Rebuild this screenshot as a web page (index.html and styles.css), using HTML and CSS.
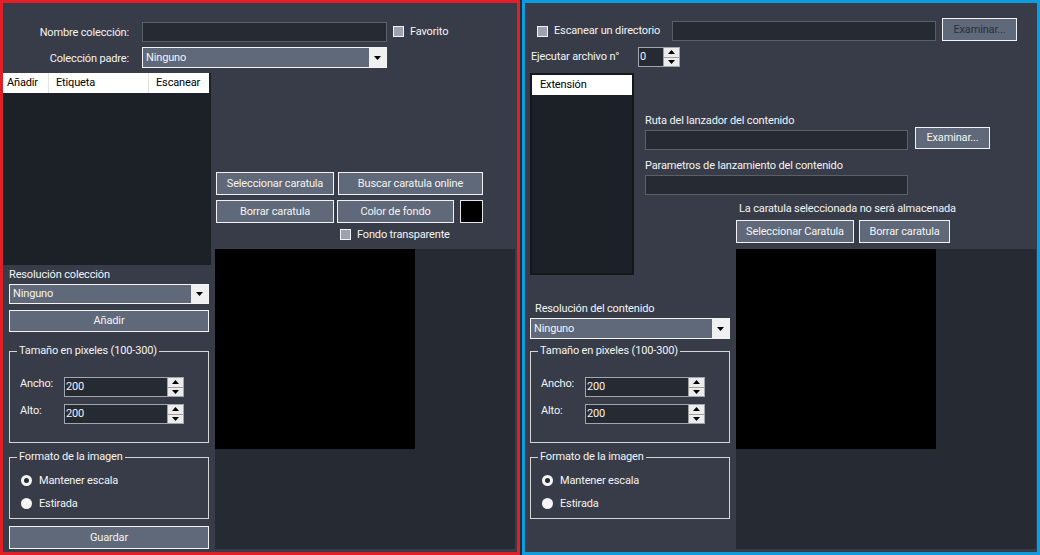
FILE: index.html
```html
<!DOCTYPE html>
<html lang="es">
<head>
<meta charset="utf-8">
<title>Colección</title>
<link rel="stylesheet" href="styles.css">
</head>
<body>
<div class="app">
  <section class="panel panel-left">
    <div class="form-top">
      <div class="frow">
        <span class="flabel">Nombre colección:</span>
        <div class="textbox tb-name"></div>
        <span class="check check-fav"><span class="cbox"></span>Favorito</span>
      </div>
      <div class="frow">
        <span class="flabel">Colección padre:</span>
        <div class="combo combo-parent"><span class="combo-text">Ninguno</span><span class="combo-btn"><svg width="7" height="4" viewBox="0 0 7 4"><path d="M0 0h7L3.5 4z" fill="#000"/></svg></span></div>
      </div>
    </div>
    <div class="lbody">
      <div class="lcol">
        <div class="listview lv-left">
          <div class="lv-head">
            <span class="lv-col c1">Añadir</span>
            <span class="lv-col c2">Etiqueta</span>
            <span class="lv-col c3">Escanear</span>
          </div>
        </div>
        <div class="lcol-inner">
          <div class="caption cap-res">Resolución colección</div>
          <div class="combo combo-res"><span class="combo-text">Ninguno</span><span class="combo-btn"><svg width="7" height="4" viewBox="0 0 7 4"><path d="M0 0h7L3.5 4z" fill="#000"/></svg></span></div>
          <button class="btn btn-add">Añadir</button>
          <div class="group group-size">
            <span class="group-title">Tamaño en pixeles (100-300)</span>
            <div class="num-row"><span class="num-label">Ancho:</span><div class="numeric num-size"><span class="num-val">200</span><span class="spin"><span class="spin-b"><svg width="7" height="4" viewBox="0 0 7 4"><path d="M0 4h7L3.5 0z" fill="#000"/></svg></span><span class="spin-b"><svg width="7" height="4" viewBox="0 0 7 4"><path d="M0 0h7L3.5 4z" fill="#000"/></svg></span></span></div></div>
            <div class="num-row"><span class="num-label">Alto:</span><div class="numeric num-size"><span class="num-val">200</span><span class="spin"><span class="spin-b"><svg width="7" height="4" viewBox="0 0 7 4"><path d="M0 4h7L3.5 0z" fill="#000"/></svg></span><span class="spin-b"><svg width="7" height="4" viewBox="0 0 7 4"><path d="M0 0h7L3.5 4z" fill="#000"/></svg></span></span></div></div>
          </div>
          <div class="group group-format">
            <span class="group-title">Formato de la imagen</span>
            <div class="radio-row"><span class="radio radio-on"></span>Mantener escala</div>
            <div class="radio-row"><span class="radio radio-off"></span>Estirada</div>
          </div>
          <button class="btn btn-save">Guardar</button>
        </div>
      </div>
      <div class="rcol">
        <div class="btn-row">
          <button class="btn btn-sel">Seleccionar caratula</button>
          <button class="btn btn-online">Buscar caratula online</button>
        </div>
        <div class="btn-row btn-row-2">
          <button class="btn btn-del">Borrar caratula</button>
          <button class="btn btn-color">Color de fondo</button>
          <span class="swatch"></span>
        </div>
        <span class="check check-transp"><span class="cbox"></span>Fondo transparente</span>
        <div class="preview"><div class="preview-img"></div></div>
      </div>
    </div>
  </section>

  <section class="panel panel-right">
    <div class="r-row1">
      <span class="check r-check"><span class="cbox"></span>Escanear un directorio</span>
      <div class="textbox r-tb"></div>
      <button class="btn btn-disabled r-exam">Examinar...</button>
    </div>
    <div class="r-row2">
      <span class="r-lbl">Ejecutar archivo n°</span>
      <div class="numeric num-exec"><span class="num-val">0</span><span class="spin"><span class="spin-b"><svg width="7" height="4" viewBox="0 0 7 4"><path d="M0 4h7L3.5 0z" fill="#000"/></svg></span><span class="spin-b"><svg width="7" height="4" viewBox="0 0 7 4"><path d="M0 0h7L3.5 4z" fill="#000"/></svg></span></span></div>
    </div>
    <div class="r-body">
      <div class="r-left">
        <div class="lv-ext"><div class="lv-ext-head">Extensión</div></div>
        <div class="caption cap-res-r">Resolución del contenido</div>
        <div class="combo combo-res-r"><span class="combo-text">Ninguno</span><span class="combo-btn"><svg width="7" height="4" viewBox="0 0 7 4"><path d="M0 0h7L3.5 4z" fill="#000"/></svg></span></div>
        <div class="group group-size group-size-r">
          <span class="group-title">Tamaño en pixeles (100-300)</span>
          <div class="num-row"><span class="num-label">Ancho:</span><div class="numeric num-size"><span class="num-val">200</span><span class="spin"><span class="spin-b"><svg width="7" height="4" viewBox="0 0 7 4"><path d="M0 4h7L3.5 0z" fill="#000"/></svg></span><span class="spin-b"><svg width="7" height="4" viewBox="0 0 7 4"><path d="M0 0h7L3.5 4z" fill="#000"/></svg></span></span></div></div>
          <div class="num-row"><span class="num-label">Alto:</span><div class="numeric num-size"><span class="num-val">200</span><span class="spin"><span class="spin-b"><svg width="7" height="4" viewBox="0 0 7 4"><path d="M0 4h7L3.5 0z" fill="#000"/></svg></span><span class="spin-b"><svg width="7" height="4" viewBox="0 0 7 4"><path d="M0 0h7L3.5 4z" fill="#000"/></svg></span></span></div></div>
        </div>
        <div class="group group-format">
          <span class="group-title">Formato de la imagen</span>
          <div class="radio-row"><span class="radio radio-on"></span>Mantener escala</div>
          <div class="radio-row"><span class="radio radio-off"></span>Estirada</div>
        </div>
      </div>
      <div class="r-top">
        <div class="caption cap-ruta">Ruta del lanzador del contenido</div>
        <div class="ruta-row">
          <div class="textbox r-path"></div>
          <button class="btn r-exam2">Examinar...</button>
        </div>
        <div class="caption cap-param">Parametros de lanzamiento del contenido</div>
        <div class="textbox r-param"></div>
        <div class="caption cap-note">La caratula seleccionada no será almacenada</div>
        <div class="btn-row r-btns">
          <button class="btn btn-sel-r">Seleccionar Caratula</button>
          <button class="btn btn-del-r">Borrar caratula</button>
        </div>
      </div>
      <div class="preview r-preview"><div class="preview-img"></div></div>
    </div>
  </section>
</div>
</body>
</html>
```

FILE: styles.css
```css
* { box-sizing: border-box; }
html, body { margin: 0; padding: 0; }
body {
  width: 1040px;
  height: 555px;
  overflow: hidden;
  background: #262a33;
  font-family: Roboto, "Liberation Sans", Arial, sans-serif;
  font-size: 11px;
  line-height: 14px;
  letter-spacing: -0.15px;
  color: #f4f4f4;
}
.app { display: flex; gap: 2px; height: 555px; }
.panel { height: 555px; background: #373c48; border: 3px solid; }
.panel-left { width: 520px; border-color: #e41e26; }
.panel-right { width: 518px; border-color: #0b9de0; }

/* generic controls */
.textbox { height: 20px; background: #262a33; border: 1px solid #5c5f66; }
.combo {
  display: flex; align-items: stretch;
  height: 21px; background: #5f6979; border: 1px solid #f4f4f4;
}
.combo-text { flex: 1; padding-left: 3px; display: flex; align-items: center; color: #f4f4f4; }
.combo-btn { width: 17px; background: #f0f0f0; display: flex; align-items: center; justify-content: center; }
.btn {
  display: flex; align-items: center; justify-content: center;
  padding: 0; margin: 0;
  font: inherit; letter-spacing: inherit; color: #f4f4f4;
  background: #5f6979; border: 1px solid #f2f2f2; border-radius: 0;
}
.btn-disabled { color: #2c303b; }
.check { display: flex; align-items: center; gap: 6px; }
.cbox { width: 11px; height: 11px; border: 1px solid #f2f2f2; background: #9ba1b1; flex: none; }
.caption { height: 14px; }

.numeric {
  display: flex; height: 20px; background: #262a33; border: 1px solid #a3a6ac;
}
.num-val { flex: 1; padding-left: 1px; display: flex; align-items: center; color: #f4f4f4; }
.spin { width: 16px; display: flex; flex-direction: column; gap: 1px; background: #a0a0a0; border-left: 1px solid #a0a0a0; }
.spin-b { flex: 1; background: #ececec; display: flex; align-items: center; justify-content: center; }

.group { position: relative; border: 1px solid #d6d6d6; width: 200px; }
.group-title { position: absolute; top: -8px; left: 7px; padding: 0 2px; background: #373c48; white-space: nowrap; }
.group-size { height: 92px; padding: 25px 0 0 10px; display: flex; flex-direction: column; gap: 7px; }
.group-format { height: 62px; margin-top: 14px; padding: 11px 0 0 11px; }
.num-row { display: flex; align-items: flex-start; }
.num-label { width: 44px; line-height: 14px; padding-top: 0; }
.num-size { width: 120px; }
.radio-row { height: 23px; display: flex; align-items: center; gap: 7px; }
.radio { width: 11px; height: 11px; border-radius: 50%; background: #f6f6f6; flex: none; }
.radio-on { border: 3px solid #f6f6f6; background: #262a33; }

.preview { width: 300px; height: 300px; background: #262a33; }
.preview-img { width: 200px; height: 200px; background: #000; }

/* left panel */
.form-top { padding-top: 18px; display: flex; flex-direction: column; gap: 5px; }
.frow { display: flex; align-items: center; height: 21px; }
.flabel { width: 126px; margin-right: 13px; text-align: right; padding-top: 2px; }
.tb-name { width: 245px; }
.check-fav { margin-left: 6px; }
.combo-parent { width: 245px; }

.lbody { display: flex; gap: 4px; margin-top: 5px; }
.lcol { width: 208px; }
.listview { height: 192px; background: #1c2027; }
.lv-head { display: flex; width: 206px; height: 20px; background: #fff; color: #000; }
.lv-col { display: flex; align-items: center; }
.c1 { width: 45px; padding-left: 4px; }
.c2 { width: 100px; padding-left: 7px; border-left: 1px solid #e3e3e3; }
.c3 { flex: 1; padding-left: 7px; border-left: 1px solid #e3e3e3; }
.lcol-inner { padding-left: 6px; display: flex; flex-direction: column; width: 206px; }
.cap-res { margin-top: 3px; }
.combo-res { margin-top: 2px; width: 200px; height: 20px; }
.btn-add { margin-top: 6px; width: 200px; height: 22px; }
.lcol-inner .group-size { margin-top: 19px; }
.btn-save { margin-top: 7px; width: 200px; height: 23px; }

.rcol { width: 300px; padding-top: 99px; display: flex; flex-direction: column; }
.btn-row { display: flex; gap: 4px; height: 23px; }
.rcol .btn-row { padding-left: 1px; }
.btn-row-2 { margin-top: 5px; gap: 3px; }
.btn-sel, .btn-del { width: 118px; }
.btn-online { width: 145px; }
.btn-color { width: 117px; }
.swatch { width: 23px; height: 23px; margin-left: 3px; background: #000; border: 1px solid #e6e6e6; }
.check-transp { margin: 5px 0 0 125px; height: 13px; }
.rcol .preview { margin-top: 8px; }

/* right panel */
.r-row1 { display: flex; align-items: flex-start; padding: 15px 0 0 12px; }
.r-check { width: 135px; height: 20px; margin-top: 3px; }
.r-tb { width: 264px; margin-top: 3px; }
.r-exam { width: 75px; height: 23px; margin-left: 6px; }
.r-row2 { display: flex; align-items: center; height: 20px; margin-top: 6px; padding-left: 6px; }
.r-lbl { width: 107px; }
.num-exec { width: 42px; }

.r-body {
  margin-top: 6px; padding-left: 5px;
  display: grid;
  grid-template-columns: 104px 11px 85px 6px 300px;
  grid-template-rows: 176px 300px;
}
.r-left { grid-column: 1 / 4; grid-row: 1 / 3; display: flex; flex-direction: column; align-items: flex-start; }
.lv-ext { width: 104px; height: 202px; background: #1c2027; border: 2px solid #15171c; }
.lv-ext-head { height: 20px; background: #fff; color: #000; padding-left: 8px; display: flex; align-items: center; }
.cap-res-r { margin-top: 27px; padding-left: 5px; }
.combo-res-r { margin-top: 2px; width: 200px; }
.group-size-r { margin-top: 12px; }

.r-top { grid-column: 3 / 6; grid-row: 1; display: flex; flex-direction: column; align-items: flex-start; padding-top: 41px; }
.cap-ruta { height: 13px; }
.ruta-row { display: flex; align-items: flex-start; gap: 7px; height: 23px; }
.r-path { width: 263px; margin-top: 3px; }
.r-exam2 { width: 75px; height: 22px; }
.cap-param { margin-top: 9px; }
.r-param { width: 263px; margin-top: 2px; }
.cap-note { margin: 7px 0 0 94px; }
.r-btns { margin: 4px 0 0 91px; gap: 5px; }
.btn-sel-r { width: 118px; }
.btn-del-r { width: 91px; }
.r-preview { grid-column: 5; grid-row: 2; }
```
